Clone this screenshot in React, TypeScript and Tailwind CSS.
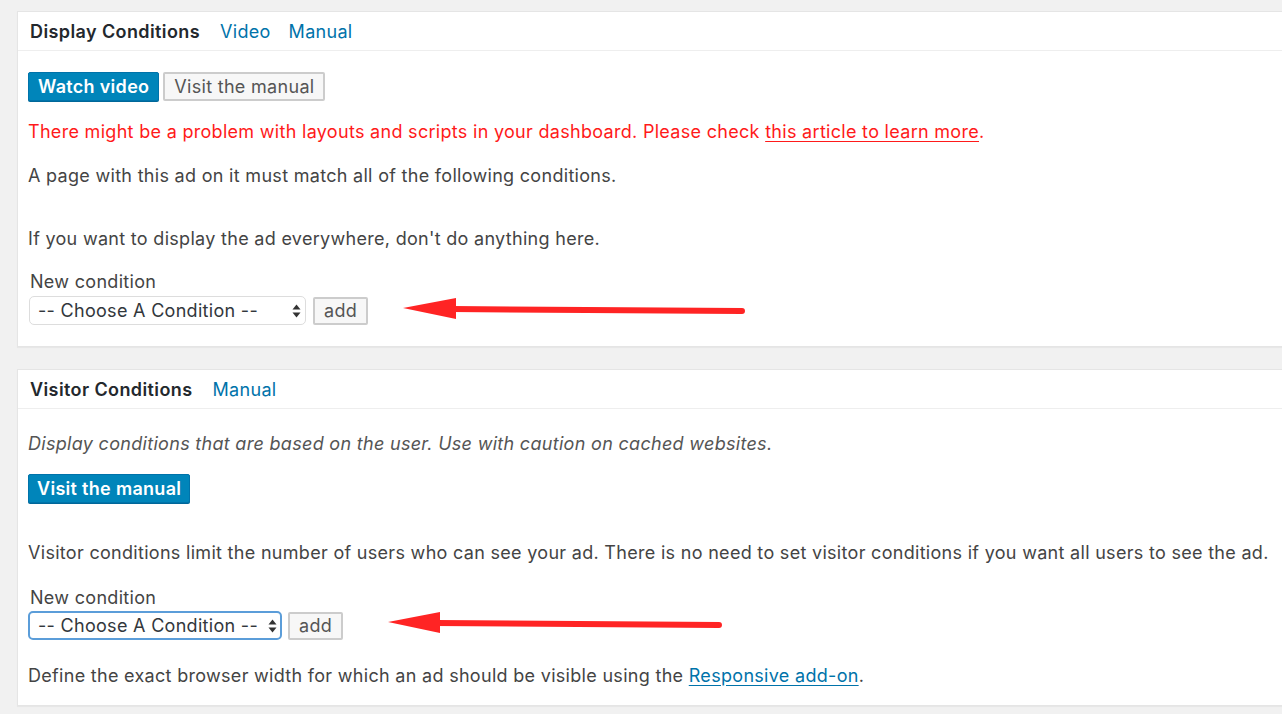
import React from 'react';

const font = { fontFamily: 'Inter, "Noto Sans", sans-serif' };

function Select({ focused, width }: { focused?: boolean; width: string }) {
  return (
    <div className={`relative ${width}`}>
      <div
        className={`h-[29px] w-full rounded-[5px] bg-white pl-[8px] flex items-center text-[18px] tracking-[0.3px] text-[#32373c] ${
          focused ? 'border-2 border-[#5b9dd9]' : 'border border-[#ddd]'
        }`}
      >
        -- Choose A Condition --
      </div>
      <svg className="absolute right-[5px] top-[8px]" width="9" height="14" viewBox="0 0 9 14">
        <path d="M4.5 0.5 L8.5 5.5 L0.5 5.5 Z" fill="#333" />
        <path d="M4.5 13.5 L8.5 8.5 L0.5 8.5 Z" fill="#333" />
      </svg>
    </div>
  );
}

function AddButton() {
  return (
    <button className="h-[28px] px-[9px] border-2 border-[#ccc] bg-[#f7f7f7] text-[#555] text-[18px] tracking-[0.3px] leading-none rounded-[2px]">
      add
    </button>
  );
}

function Arrow({ className, w, h, tip, base, tail }: { className: string; w: number; h: number; tip: [number, number]; base: [number, number, number]; tail: [number, number] }) {
  return (
    <svg className={className} width={w} height={h} viewBox={`0 0 ${w} ${h}`}>
      <line x1={base[0] - 4} y1={tip[1] + 1} x2={tail[0]} y2={tail[1]} stroke="#ff2424" strokeWidth="6" strokeLinecap="round" />
      <polygon points={`${tip[0]},${tip[1]} ${base[0]},${base[1]} ${base[0]},${base[2]}`} fill="#ff2424" />
    </svg>
  );
}

export default function App() {
  return (
    <div className="relative min-h-[714px] bg-[#f1f1f1] pt-[11px] pl-[17px] overflow-hidden" style={font}>
      {/* Display Conditions */}
      <div className="bg-white border border-[#e5e5e5] border-r-0 shadow-[0_1px_1px_rgba(0,0,0,0.04)]">
        <div className="h-[39px] border-b border-[#eee] flex items-center pl-[12px] gap-[20px] text-[18px] tracking-[0.3px]">
          <span className="font-semibold text-[#23282d] tracking-[0.4px]">Display Conditions</span>
          <span className="text-[#0073aa]">Video</span>
          <span className="text-[#0073aa] -ml-[2px]">Manual</span>
        </div>
        <div className="pl-[10px] pb-[21px] text-[18px] tracking-[0.3px] text-[#444] leading-[22px]">
          <div className="flex gap-[4px] mt-[21px]">
            <button className="h-[29px] px-[9px] bg-[#0085ba] border border-[#0073aa] text-white font-semibold text-[18px] rounded-[2px] shadow-[0_1px_0_#006799]">
              Watch video
            </button>
            <button className="h-[29px] px-[9px] bg-[#f7f7f7] border-2 border-[#ccc] text-[#555] text-[18px] rounded-[2px]">
              Visit the manual
            </button>
          </div>
          <p className="mt-[20px] text-[#ff1a1a]">
            There might be a problem with layouts and scripts in your dashboard. Please check{' '}
            <span className="underline underline-offset-[3px]">this article to learn more</span>.
          </p>
          <p className="mt-[22px]">A page with this ad on it must match all of the following conditions.</p>
          <p className="mt-[41px]">If you want to display the ad everywhere, don't do anything here.</p>
          <p className="mt-[21px] pl-[2px]">New condition</p>
          <div className="mt-[3px] flex items-center gap-[7px]">
            <Select width="w-[277px] ml-[1px]" />
            <AddButton />
          </div>
        </div>
      </div>

      {/* Visitor Conditions */}
      <div className="mt-[22px] bg-white border border-[#e5e5e5] border-r-0 shadow-[0_1px_1px_rgba(0,0,0,0.04)]">
        <div className="h-[39px] border-b border-[#eee] flex items-center pl-[12px] gap-[20px] text-[18px] tracking-[0.3px]">
          <span className="font-semibold text-[#23282d] tracking-[0.4px]">Visitor Conditions</span>
          <span className="text-[#0073aa]">Manual</span>
        </div>
        <div className="pl-[10px] pb-[18px] text-[18px] tracking-[0.3px] text-[#444] leading-[22px]">
          <p className="mt-[24px] italic text-[#555]">
            Display conditions that are based on the user. Use with caution on cached websites.
          </p>
          <div className="mt-[19px] flex">
            <button className="h-[29px] px-[8px] bg-[#0085ba] border border-[#0073aa] text-white font-semibold text-[18px] rounded-[2px] shadow-[0_1px_0_#006799]">
              Visit the manual
            </button>
          </div>
          <p className="mt-[39px] whitespace-nowrap">
            Visitor conditions limit the number of users who can see your ad. There is no need to set visitor conditions if you want all users to see the ad.
          </p>
          <p className="mt-[23px] pl-[2px]">New condition</p>
          <div className="mt-[2px] flex items-center gap-[6px]">
            <Select focused width="w-[254px]" />
            <AddButton />
          </div>
          <p className="mt-[25px]">
            Define the exact browser width for which an ad should be visible using the{' '}
            <span className="text-[#0073aa] underline underline-offset-[3px]">Responsive add-on</span>.
          </p>
        </div>
      </div>

      <Arrow className="absolute left-[400px] top-[295px]" w={350} h={30} tip={[3, 13]} base={[56, 3, 24]} tail={[342, 16]} />
      <Arrow className="absolute left-[385px] top-[608px]" w={340} h={30} tip={[3, 14]} base={[55, 4, 25]} tail={[334, 17]} />
    </div>
  );
}
